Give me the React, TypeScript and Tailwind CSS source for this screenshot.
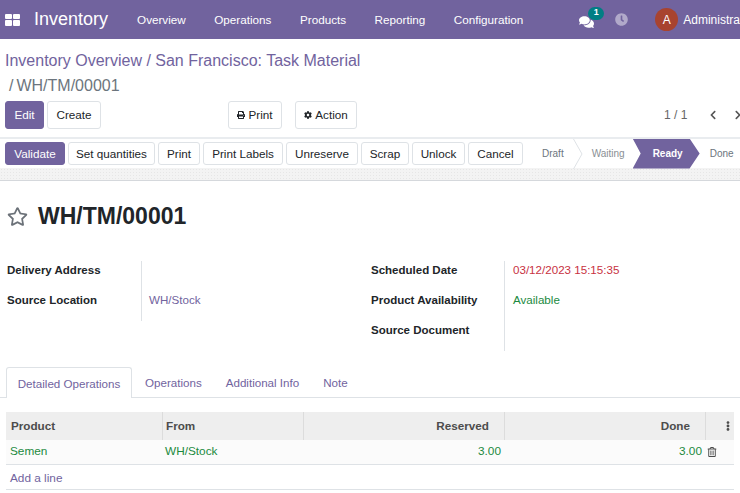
import { FaComments, FaClock, FaPrint, FaCog, FaRegTrashAlt, FaEllipsisV, FaChevronLeft, FaChevronRight, FaRegStar } from 'react-icons/fa';

const menus = ['Overview', 'Operations', 'Products', 'Reporting', 'Configuration'];
const actions = ['Set quantities', 'Print', 'Print Labels', 'Unreserve', 'Scrap', 'Unlock', 'Cancel'];
const actionWidths = ['w-[87px]', 'w-[42px]', 'w-[80px]', 'w-[72px]', 'w-[48px]', 'w-[53px]', 'w-[55px]'];
const tabs = ['Operations', 'Additional Info', 'Note'];

const Btn = ({ children, className = '', primary = false }: { children: React.ReactNode; className?: string; primary?: boolean }) => (
  <button
    className={`flex shrink-0 items-center justify-center rounded-[3px] border text-[11.7px] ${
      primary ? 'border-[#71639e] bg-[#71639e] text-white' : 'border-[#dee2e6] bg-white text-[#212529]'
    } ${className}`}
  >
    {children}
  </button>
);

const Label = ({ children }: { children: React.ReactNode }) => (
  <div className="h-[30px] pt-[2px] text-[11.5px] leading-[14px] font-bold text-[#212529]">{children}</div>
);

const Value = ({ children, className = '' }: { children?: React.ReactNode; className?: string }) => (
  <div className={`h-[30px] pt-[2px] text-[11.6px] leading-[14px] ${className}`}>{children}</div>
);

export default function App() {
  return (
    <div className="h-[493px] w-[740px] overflow-hidden bg-white font-['Liberation_Sans',Arial,sans-serif] whitespace-nowrap">
      <nav className="flex h-[39px] w-[900px] items-center bg-[#71639e] text-white">
        <div className="ml-[5px] grid h-[12px] w-[15px] grid-cols-2 gap-[1px]">
          <span className="rounded-[1px] bg-white" />
          <span className="rounded-[1px] bg-white" />
          <span className="rounded-[1px] bg-white" />
          <span className="rounded-[1px] bg-white" />
        </div>
        <span className="ml-[14px] text-[18px]">Inventory</span>
        <div className="ml-[29px] flex gap-[28.5px] text-[11.7px]">
          {menus.map((m) => (
            <span key={m}>{m}</span>
          ))}
        </div>
        <div className="relative ml-[56px] h-[16px] w-[16px]">
          <FaComments className="absolute top-[3px] left-0 h-[14px] w-[15px]" />
          <span className="absolute -top-[5px] left-[9px] flex h-[13px] w-[16px] items-center justify-center rounded-full bg-[#017e84] text-[9px] font-bold">1</span>
        </div>
        <FaClock className="ml-[20px] h-[13px] w-[13px] text-white/45" />
        <span className="ml-[27px] flex h-[23px] w-[23px] items-center justify-center rounded-full bg-[#a8432f] text-[12px]">A</span>
        <span className="ml-[5px] text-[12px]">Administrator</span>
      </nav>

      <div className="px-[5px] pt-[9px] text-[16px] text-[#71639e]">
        <div className="flex h-[25px] items-center">Inventory Overview / San Francisco: Task Material</div>
        <div className="flex h-[25px] items-center pl-[4px] text-[#6c757d]">
          <span>/</span>
          <span className="ml-[3px]">WH/TM/00001</span>
        </div>
      </div>

      <div className="mt-[3px] flex h-[28px] items-center pl-[5px]">
        <Btn primary className="h-[28px] w-[39px]">Edit</Btn>
        <Btn className="ml-[3px] h-[28px] w-[54px]">Create</Btn>
        <Btn className="ml-[127px] h-[28px] w-[54px] gap-[3px]">
          <FaPrint className="h-[8px] w-[8px]" />
          Print
        </Btn>
        <Btn className="ml-[13px] h-[28px] w-[62px] gap-[3px]">
          <FaCog className="h-[8px] w-[8px]" />
          Action
        </Btn>
        <span className="ml-[307px] shrink-0 text-[12px] text-[#666]">1 / 1</span>
        <FaChevronLeft className="ml-[22px] h-[10px] w-[8px] shrink-0 text-[#555]" />
        <FaChevronRight className="ml-[17px] h-[10px] w-[8px] shrink-0 text-[#555]" />
      </div>

      <div className="mt-[8px] flex h-[31px] items-center border-t-2 border-[#e9ecef] pl-[5px]">
        <div className="flex gap-[3px]">
          <Btn primary className="h-[23px] w-[60px] font-medium">Validate</Btn>
          {actions.map((a, i) => (
            <Btn key={a} className={`h-[23px] ${actionWidths[i]}`}>
              {a}
            </Btn>
          ))}
        </div>
        <div className="ml-[19px] flex h-[30px] items-center text-[10px] text-[#6c757d]">
          <span>Draft</span>
          <svg className="ml-[9px] h-[30px] w-[10px]" viewBox="0 0 10 30" fill="none">
            <path d="M0.5 0 L9 15 L0.5 30" stroke="#dee2e6" />
          </svg>
          <span className="ml-[9px] text-[#8a8f94]">Waiting</span>
          <span className="ml-[8px] flex h-[30px] w-[67px] items-center justify-center bg-[#71639e] pl-[3px] font-bold text-white [clip-path:polygon(0_0,85%_0,100%_50%,85%_100%,0_100%,12%_50%)]">Ready</span>
          <span className="ml-[10px]">Done</span>
        </div>
      </div>

      <div className="h-[13px] border-b border-[#d5d8dc] bg-[#f3f3f3] bg-[radial-gradient(#e6e6e6_1px,transparent_1px)] bg-[length:3px_3px]" />

      <div className="flex items-center pt-[21px] pl-[7px]">
        <FaRegStar className="h-[21px] w-[21px] text-[#6b7178]" />
        <h1 className="ml-[10px] text-[23px] leading-[29px] font-bold text-[#212529]">WH/TM/00001</h1>
      </div>

      <div className="mt-[30px] flex h-[90px] pl-[7px]">
        <div className="w-[134px]">
          <Label>Delivery Address</Label>
          <Label>Source Location</Label>
        </div>
        <div className="h-[60px] w-[230px] border-l border-[#dee2e6] pl-[7px]">
          <Value />
          <Value className="text-[#71639e]">WH/Stock</Value>
        </div>
        <div className="w-[133px]">
          <Label>Scheduled Date</Label>
          <Label>Product Availability</Label>
          <Label>Source Document</Label>
        </div>
        <div className="border-l border-[#dee2e6] pl-[8px]">
          <Value className="text-[#c8323f]">03/12/2023 15:15:35</Value>
          <Value className="text-[#1b8a3e]">Available</Value>
        </div>
      </div>

      <div className="mt-[16px] flex h-[31px] border-b border-[#dee2e6] pl-[6px] text-[11.6px] text-[#71639e]">
        <div className="flex h-[31px] w-[126px] items-center justify-center rounded-t-[3px] border border-b-0 border-[#dee2e6] bg-white pt-[1px]">
          Detailed Operations
        </div>
        <div className="ml-[13px] flex gap-[24px]">
          {tabs.map((t) => (
            <span key={t} className="flex h-[30px] items-center pt-[1px]">{t}</span>
          ))}
        </div>
      </div>

      <div className="mx-[6px] mt-[14px] text-[11.8px]">
        <div className="grid h-[28px] grid-cols-[156px_141px_201px_201px_1fr] items-center bg-[#eeeeee] text-[11.7px] font-bold text-[#4c4c4c]">
          <span className="flex h-full items-center pl-[5px]">Product</span>
          <span className="flex h-full items-center border-l border-[#dcdcdc] pl-[3px]">From</span>
          <span className="flex h-full items-center justify-end border-l border-[#dcdcdc] pr-[15px]">Reserved</span>
          <span className="flex h-full items-center justify-end border-l border-[#dcdcdc] pr-[15px]">Done</span>
          <span className="flex h-full items-center justify-center border-l border-[#dcdcdc] pl-[15px]">
            <FaEllipsisV className="h-[10px] w-[10px]" />
          </span>
        </div>
        <div className="grid h-[25px] grid-cols-[156px_141px_201px_201px_1fr] items-center border-b border-[#dee2e6] bg-[#fbfbfb] text-[#1b8a3e]">
          <span className="pl-[4px]">Semen</span>
          <span className="pl-[3px]">WH/Stock</span>
          <span className="pr-[3px] text-right">3.00</span>
          <span className="pr-[3px] text-right">3.00</span>
          <FaRegTrashAlt className="ml-[2px] h-[10px] w-[10px] text-[#4c4c4c]" />
        </div>
        <div className="flex h-[25px] items-center border-b border-[#dee2e6] pt-[3px] pl-[4px] text-[#71639e]">Add a line</div>
      </div>
    </div>
  );
}
